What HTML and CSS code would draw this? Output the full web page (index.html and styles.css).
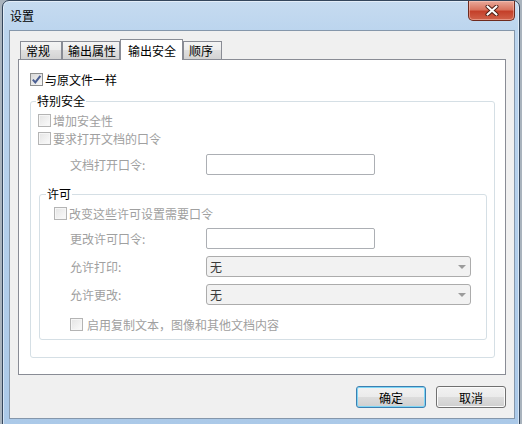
FILE: index.html
```html
<!DOCTYPE html>
<html lang="zh-CN">
<head>
    <meta charset="UTF-8">
    <title>设置</title>
    <link rel="stylesheet" href="styles.css">
</head>
<body>

    <div class="window">

        <div class="titlebar">
            <span class="title">设置</span>
            <span class="close">
                <svg width="14" height="11" viewBox="0 0 14 11">
                    <path d="M2.5 1.5 L11.5 9.5 M11.5 1.5 L2.5 9.5" stroke="#4a1b12" stroke-width="4" stroke-linecap="round"/>
                    <path d="M2.5 1.5 L11.5 9.5 M11.5 1.5 L2.5 9.5" stroke="#fff" stroke-width="2.2" stroke-linecap="round"/>
                </svg>
            </span>
        </div>

        <div class="client">

            <!-- ----- Onglets ----- -->
            <div class="tabs">
                <div class="tab t1">常规</div>
                <div class="tab t2">输出属性</div>
                <div class="tab active t3">输出安全</div>
                <div class="tab t4">顺序</div>
            </div>

            <div class="panel">

                <div class="cbrow first">
                    <span class="cb checked">
                        <svg width="11" height="11" viewBox="0 0 11 11">
                            <path d="M1.8 5.6 L4.3 8.4 L9.4 1.8" fill="none" stroke="#4b5f93" stroke-width="2"/>
                        </svg>
                    </span>
                    <span>与原文件一样</span>
                </div>

                <fieldset class="group outer">
                    <legend>特别安全</legend>

                    <div class="cbrow r-add">
                        <span class="cb"></span><span>增加安全性</span>
                    </div>
                    <div class="cbrow r-open">
                        <span class="cb"></span><span>要求打开文档的口令</span>
                    </div>
                    <div class="field r-openpw">
                        <span class="lbl">文档打开口令:</span>
                        <span class="textbox"></span>
                    </div>

                    <fieldset class="group inner">
                        <legend>许可</legend>

                        <div class="cbrow r-change">
                            <span class="cb"></span><span>改变这些许可设置需要口令</span>
                        </div>
                        <div class="field r-changepw">
                            <span class="lbl">更改许可口令:</span>
                            <span class="textbox"></span>
                        </div>
                        <div class="field r-print">
                            <span class="lbl">允许打印:</span>
                            <span class="select"><span>无</span><span class="arrow"></span></span>
                        </div>
                        <div class="field r-modify">
                            <span class="lbl">允许更改:</span>
                            <span class="select"><span>无</span><span class="arrow"></span></span>
                        </div>
                        <div class="cbrow r-copy">
                            <span class="cb"></span><span>启用复制文本，图像和其他文档内容</span>
                        </div>
                    </fieldset>
                </fieldset>

            </div>

            <div class="buttons">
                <div class="btn default">确定</div>
                <div class="btn">取消</div>
            </div>

        </div>
    </div>

</body>
</html>
```

FILE: styles.css
```css
html, body {margin: 0; overflow: hidden}
body {
    background: #a9b3bd;
    font: 12px "Noto Sans CJK SC", "Liberation Sans", sans-serif;
    color: #000;
}
* {box-sizing: border-box}

/* ----- Fenêtre ----- */

.window {
    margin-left: 2px;
    width: 518px;
    height: 426px;
    border: 1px solid #34465c;
    border-radius: 7px 7px 0 0;
    background: linear-gradient(to bottom, #c6dbf0 0, #bcd5ee 29px, #abc9e8 100%);
    box-shadow: inset 0 0 0 1px rgba(255, 255, 255, 0.5);
    display: flex;
    flex-direction: column;
}

.titlebar {
    height: 29px;
    display: flex;
    justify-content: space-between;
    align-items: flex-start;
}

.title {
    padding-left: 7px;
    line-height: 29px;
}

.close {
    width: 47px;
    height: 20px;
    margin-right: 4px;
    border: 1px solid #6e2a1e;
    border-top: 0;
    border-radius: 0 0 5px 5px;
    background: linear-gradient(to bottom, #e9a99a 0, #d9745f 45%, #c4402a 55%, #d1624a 100%);
    box-shadow: inset 0 0 0 1px rgba(255, 210, 200, 0.45);
    display: flex;
    justify-content: center;
    align-items: center;
}

.client {
    flex: 1;
    margin: 0 4px 6px 6px;
    border: 1px solid #8597ab;
    background: #f0f0f0;
    padding: 8px 8px 0;
}

/* ----- Onglets ----- */

.tabs {
    display: flex;
    align-items: flex-end;
    height: 21px;
    margin-bottom: -1px;
    padding-left: 2px;
}

.tab {
    height: 18px;
    margin-bottom: 1px;
    padding-left: 5px;
    border: 1px solid #898c95;
    border-bottom: 0;
    background: linear-gradient(to bottom, #f4f4f4 0, #ececec 50%, #dfdfdf 50%, #d3d3d3 100%);
    display: flex;
    align-items: center;
}
.t1 {width: 42px}
.t2 {width: 58px}
.t3 {width: 63px}
.t4 {width: 39px}

.tab.active {
    height: 21px;
    margin-bottom: 0;
    padding-left: 7px;
    background: #fff;
    position: relative;
    z-index: 1;
}

.panel {
    height: 316px;
    border: 1px solid #898c95;
    background: #fff;
    padding: 13px 10px 0 11px;
}

/* ----- Lignes ----- */

.cbrow {
    display: flex;
    align-items: center;
    gap: 2px;
    height: 13px;
    color: #a0a0a0;
}
.cbrow.first {color: #000}

.cb {
    width: 13px;
    height: 13px;
    border: 1px solid #b4b4b4;
    background: linear-gradient(135deg, #e4e4e4, #fbfbfb);
    box-shadow: inset 0 0 0 1px #f6f6f6;
    flex-shrink: 0;
}
.cb.checked {
    border-color: #8e8f8f;
    background: linear-gradient(135deg, #d8d8d8, #f8f8f8);
    box-shadow: none;
    display: flex;
    align-items: center;
    justify-content: center;
}

.field {
    display: flex;
    align-items: center;
    height: 21px;
    color: #a0a0a0;
}

.lbl {width: 136px}

.textbox {
    width: 169px;
    height: 21px;
    border: 1px solid #acafb4;
    border-radius: 2px;
    background: #fff;
}

.select {
    width: 265px;
    height: 21px;
    border: 1px solid #acacac;
    border-radius: 3px;
    background: #f2f2f2;
    color: #3a3a3a;
    padding: 0 4px 0 3px;
    display: flex;
    align-items: center;
    justify-content: space-between;
}

.arrow {
    width: 0;
    height: 0;
    border-left: 4px solid transparent;
    border-right: 4px solid transparent;
    border-top: 4px solid #9c9c9c;
}

/* ----- Groupes ----- */

.group {
    margin: 0;
    min-width: 0;
    border: 1px solid #d5dfe5;
    border-radius: 3px;
}
.group legend {
    line-height: 14px;
    padding: 0 1px;
    margin-left: -1px;
}

.outer {
    margin-top: 8px;
    padding: 0 7px 17px 6px;
}
.inner {
    margin: 12px 0 0 2px;
    padding: 0 0 8px 7px;
}

.r-add {margin: 6px 0 0 1px}
.r-open {margin: 5px 0 0 1px}
.r-openpw {margin-top: 9px}
.r-openpw .lbl {margin-left: 33px}

.r-change {margin: 6px 0 0 7px}
.r-changepw {margin-top: 8px}
.r-print, .r-modify {margin-top: 7px}
.inner .lbl {margin-left: 23px}
.r-copy {margin: 13px 0 0 23px; gap: 4px}

/* ----- Boutons ----- */

.buttons {
    display: flex;
    justify-content: flex-end;
    gap: 10px;
    margin-top: 11px;
}

.btn {
    width: 70px;
    height: 22px;
    border: 1px solid #707070;
    border-radius: 3px;
    background: linear-gradient(to bottom, #f2f2f2 0, #ebebeb 50%, #dddddd 50%, #cfcfcf 100%);
    box-shadow: inset 0 0 0 1px #fbfbfb;
    display: flex;
    align-items: center;
    justify-content: center;
}
.btn.default {
    border-color: #3c7fb1;
    box-shadow: inset 0 0 0 1px #7fd6f5;
}
```
